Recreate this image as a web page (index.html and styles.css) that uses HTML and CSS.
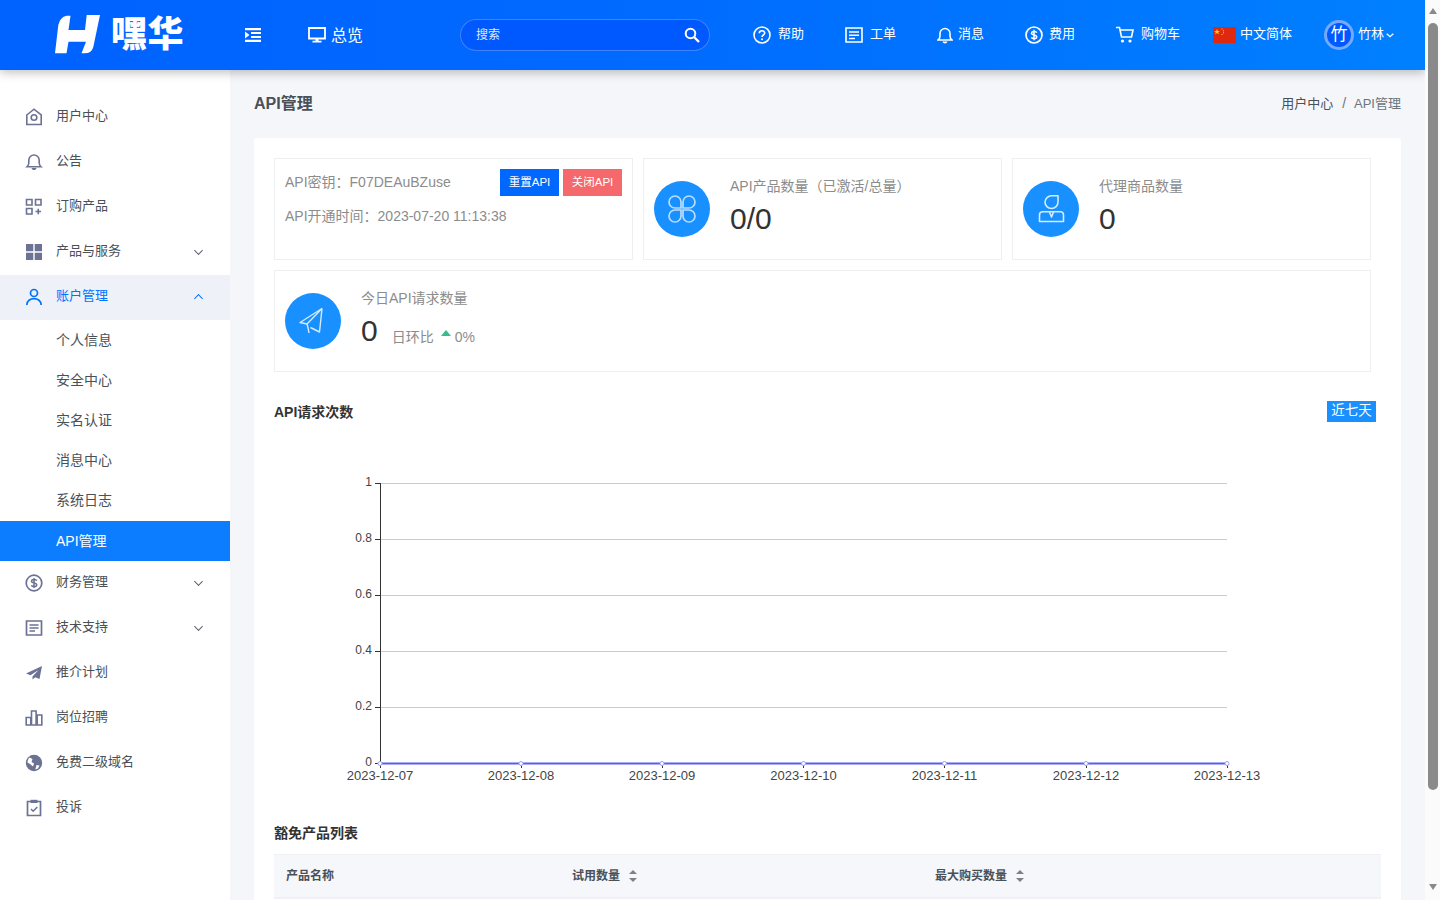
FILE: index.html
```html
<!DOCTYPE html>
<html lang="zh-CN">
<head>
<meta charset="utf-8">
<title>API管理</title>
<link rel="stylesheet" href="styles.css">
</head>
<body>
<div class="page">
  <header class="topbar">
    <div class="brand">
      <svg class="logo-h" viewBox="0 0 45 40" width="45" height="40"><path fill="#fff" d="M3.300 10Q5 2 11.700.7H15.500L13.500 15H30L31.700 0H45L38.300 32Q36.500 38.300 30 38.300H26.500L31 26.700H13.500L11.500 38.300H0Z"/></svg>
      <span class="brand-name">嘿华</span>
    </div>
    <svg class="ico menu-ico" viewBox="0 0 16 14" width="16" height="14"><path fill="#fff" d="M0 0h16v2.200H0zM6 4h10v2H6zM6 8h10v2H6zM0 11.800h16V14H0zM0 3.500 4.500 7 0 10.500z"/></svg>
    <a class="overview">
      <svg viewBox="0 0 18 16" width="18" height="16"><path fill="none" stroke="#fff" stroke-width="1.800" d="M1 1h16v10.500H1z"/><path fill="#fff" d="M7.500 11.500h3V14h-3zM4.500 13.800h9V15.500h-9z"/></svg>
      <span>总览</span>
    </a>
    <div class="search">
      <span>搜索</span>
      <svg viewBox="0 0 16 16" width="16" height="16"><circle cx="6.500" cy="6.500" r="4.800" fill="none" stroke="#fff" stroke-width="2"/><path stroke="#fff" stroke-width="2.400" d="m10 10 5 5"/></svg>
    </div>
    <nav class="topnav">
      <a class="nav-item"><svg viewBox="0 0 18 18" width="18" height="18"><circle cx="9" cy="9" r="8" fill="none" stroke="#fff" stroke-width="1.600"/><path fill="none" stroke="#fff" stroke-width="1.600" d="M6.300 7.200C6.300 4 11.700 4 11.700 7c0 2-2.700 2-2.700 4"/><circle cx="9" cy="13.300" r="1" fill="#fff"/></svg><span>帮助</span></a>
      <a class="nav-item"><svg viewBox="0 0 18 16" width="18" height="16"><path fill="none" stroke="#fff" stroke-width="1.600" d="M1 1h16v14H1z"/><path stroke="#fff" stroke-width="1.500" d="M4 5h10M4 8.200h10M4 11.400h6"/></svg><span>工单</span></a>
      <a class="nav-item item-tight"><svg viewBox="0 0 16 18" width="16" height="18"><path fill="none" stroke="#fff" stroke-width="1.600" d="M1 14c1.500-1 2-2 2-4V7.500a5 5 0 0 1 10 0V10c0 2 .5 3 2 4z"/><path fill="#fff" d="M5.500 15.500h5C10 18 6 18 5.500 15.500z"/></svg><span>消息</span></a>
      <a class="nav-item item-fee"><svg viewBox="0 0 18 18" width="18" height="18"><circle cx="9" cy="9" r="8" fill="none" stroke="#fff" stroke-width="1.700"/><path fill="none" stroke="#fff" stroke-width="1.500" d="M11.800 6.600C11 5 6.500 5 6.500 7.300c0 2.500 5.200 1 5.200 3.600 0 2.200-4.500 2-5.400.5M9 3.800v10.400"/></svg><span>费用</span></a>
      <a class="nav-item"><svg viewBox="0 0 18 18" width="18" height="18"><path fill="none" stroke="#fff" stroke-width="1.600" d="M0 1.500h3.500l2 9.500h10L17 4H4.300"/><circle cx="6.500" cy="15" r="1.600" fill="#fff"/><circle cx="14" cy="15" r="1.600" fill="#fff"/></svg><span>购物车</span></a>
      <a class="nav-item item-lang"><svg viewBox="0 0 23 16" width="23" height="16"><path fill="#de2910" d="M0 0h23v16H0z"/><path fill="#ffde00" d="m4 2 .8 2h2l-1.600 1.300.6 2L4 6l-1.800 1.300.6-2L1.200 4h2zM8.500 1.500h1v1h-1zM10 3.200h1v1h-1zM10 5.200h1v1h-1zM8.500 7h1v1h-1z"/></svg><span>中文简体</span></a>
      <a class="nav-item item-user"><span class="avatar">竹</span><span>竹林</span><svg viewBox="0 0 8 5" width="8" height="5"><path fill="none" stroke="#fff" stroke-width="1.300" d="m.7.700 3.300 3 3.300-3"/></svg></a>
    </nav>
  </header>
  <div class="body">
    <aside class="sidebar">
      <a class="side-item"><svg viewBox="0 0 18 18"><path fill="none" stroke="#6c7293" stroke-width="1.600" d="M1.800 7 9 1.200 16.200 7v9.500H1.800z"/><circle cx="9" cy="9.500" r="2.800" fill="none" stroke="#6c7293" stroke-width="1.600"/></svg><span>用户中心</span></a>
      <a class="side-item"><svg viewBox="0 0 18 18"><path fill="none" stroke="#6c7293" stroke-width="1.600" d="M2 13.800c1.200-1 1.800-2 1.800-4V7.200a5.200 5.200 0 0 1 10.400 0v2.600c0 2 .6 3 1.800 4z"/><path fill="#6c7293" d="M6.500 15h5c-.5 2.800-4.500 2.800-5 0z"/></svg><span>公告</span></a>
      <a class="side-item"><svg viewBox="0 0 18 18"><path fill="none" stroke="#6c7293" stroke-width="1.600" d="M1.500 1.500h5.500v5.500H1.500zM10.500 1.500H16v5.500h-5.500zM1.500 10.500h5.500V16H1.500z"/><path stroke="#6c7293" stroke-width="1.600" d="M10.500 13.500h5.500M13.250 10.800v5.400"/></svg><span>订购产品</span></a>
      <a class="side-item"><svg viewBox="0 0 18 18"><path fill="#6c7293" d="M1 1h7.300v7.300H1zM9.700 1H17v7.300H9.700zM1 9.700h7.300V17H1zM9.700 9.700H17V17H9.700z"/></svg><span>产品与服务</span><i class="chev"></i></a>
      <a class="side-item is-open"><svg viewBox="0 0 18 18"><circle cx="9" cy="5" r="3.500" fill="none" stroke="#0073ff" stroke-width="1.700"/><path fill="none" stroke="#0073ff" stroke-width="1.700" d="M1.800 17c0-8.500 14.400-8.500 14.400 0"/></svg><span>账户管理</span><i class="chev up"></i></a>
      <a class="sub-item">个人信息</a>
      <a class="sub-item">安全中心</a>
      <a class="sub-item">实名认证</a>
      <a class="sub-item">消息中心</a>
      <a class="sub-item">系统日志</a>
      <a class="sub-item is-active">API管理</a>
      <a class="side-item"><svg viewBox="0 0 18 18"><circle cx="9" cy="9" r="7.800" fill="none" stroke="#6c7293" stroke-width="1.700"/><path fill="none" stroke="#6c7293" stroke-width="1.500" d="M11.800 6.600C11 5 6.500 5 6.500 7.300c0 2.500 5.200 1 5.200 3.600 0 2.200-4.500 2-5.400.5M9 4v10"/></svg><span>财务管理</span><i class="chev"></i></a>
      <a class="side-item"><svg viewBox="0 0 18 18"><path fill="none" stroke="#6c7293" stroke-width="1.700" d="M1.500 2h15v14h-15z"/><path stroke="#6c7293" stroke-width="1.500" d="M4.500 6h9M4.500 9h9M4.500 12h5.500"/></svg><span>技术支持</span><i class="chev"></i></a>
      <a class="side-item"><svg viewBox="0 0 18 18"><path fill="#6c7293" d="M17 2 1 9.500l4.500 1.800L13.500 6l-6 6.500v3l2.800-2.200 4.200 1.700z"/></svg><span>推介计划</span></a>
      <a class="side-item"><svg viewBox="0 0 18 18"><path fill="none" stroke="#6c7293" stroke-width="1.600" d="M1.200 8.500h4.600V16H1.200zM6.500 2h4.600v14H6.500zM12.200 6h4.600v10h-4.600z"/></svg><span>岗位招聘</span></a>
      <a class="side-item"><svg viewBox="0 0 18 18"><circle cx="9" cy="9" r="8.200" fill="#6c7293"/><path fill="#fff" d="M4.500 3.500 7.500 5 6.500 8 9 9.500 8 12.500 5 10 2.500 8.500C2.600 6.500 3.300 4.800 4.500 3.500zM11.500 11l3 .5-1.500 3-2.700 1z"/></svg><span>免费二级域名</span></a>
      <a class="side-item"><svg viewBox="0 0 18 18"><path fill="none" stroke="#6c7293" stroke-width="1.700" d="M2.500 2.500h13v14h-13z"/><path fill="#6c7293" d="M5.500 .8h7V4h-7z"/><path fill="none" stroke="#6c7293" stroke-width="1.500" d="m6 10 2.200 2.200L12.300 8"/></svg><span>投诉</span></a>
    </aside>
    <main class="content">
      <div class="title-row">
        <h1>API管理</h1>
        <div class="crumbs"><span class="crumb-link">用户中心</span><span class="crumb-sep">/</span><span>API管理</span></div>
      </div>
      <section class="card">
        <div class="stats">
          <div class="stat stat-key">
            <div class="key-lines">
              <p>API密钥：F07DEAuBZuse</p>
              <p>API开通时间：2023-07-20 11:13:38</p>
            </div>
            <div class="key-btns"><button class="btn btn-blue">重置API</button><button class="btn btn-red">关闭API</button></div>
          </div>
          <div class="stat">
            <div class="stat-ico"><svg viewBox="0 0 28 28" width="28" height="28"><g fill="none" stroke="#b9ddff" stroke-width="1.700"><path d="M13 13V7a6 6 0 1 0-6 6zM15 13V7a6 6 0 1 1 6 6zM13 15v6a6 6 0 1 1-6-6zM15 15v6a6 6 0 1 0 6-6z"/></g></svg></div>
            <div class="stat-body"><div class="stat-label">API产品数量（已激活/总量）</div><div class="stat-num">0/0</div></div>
          </div>
          <div class="stat">
            <div class="stat-ico"><svg viewBox="0 0 28 28" width="28" height="28"><g fill="none" stroke="#d5ebff" stroke-width="1.600" stroke-linejoin="round"><path d="M8 7a6.500 6.500 0 0 1 6.500-6.200H21V7a6.500 6.500 0 0 1-13 0z"/><path d="M2.500 26.500V20q0-3.200 3.200-3.200h17.600q3.200 0 3.200 3.200v6.500z"/><path d="m12.500 17 2 5 2-5"/></g></svg></div>
            <div class="stat-body"><div class="stat-label">代理商品数量</div><div class="stat-num">0</div></div>
          </div>
          <div class="stat stat-wide">
            <div class="stat-ico"><svg viewBox="0 0 28 28" width="28" height="28"><g fill="none" stroke="#d5ebff" stroke-width="1.400" stroke-linejoin="round"><path d="M23 1.500 1 15.500l7 1.500M23 1.500 20.500 25l-9-4.500"/><path d="M23 1.500 8 17c1 3 1.500 6 2 9"/></g></svg></div>
            <div class="stat-body"><div class="stat-label">今日API请求数量</div><div class="stat-line"><span class="stat-num">0</span><span class="ratio">日环比</span><i class="tri"></i><span class="pct">0%</span></div></div>
          </div>
        </div>
        <div class="chart-head"><h2>API请求次数</h2><span class="range">近七天</span></div>
        <svg class="chart" viewBox="0 0 1107 371" width="1107" height="371">
          <g stroke="#ccc"><path d="M106 43.500h847M106 99.500h847M106 155.500h847M106 211.500h847M106 267.500h847"/></g>
          <g stroke="#333"><path d="M106.500 43v281M101 43.500h5M101 99.500h5M101 155.500h5M101 211.500h5M101 267.500h5M101 323.500h5"/><path d="M106.500 323v5M247.500 323v5M388.500 323v5M529.500 323v5M670.500 323v5M812.500 323v5M953.500 323v5"/></g>
          <g class="ylab"><text x="98" y="46">1</text><text x="98" y="102">0.8</text><text x="98" y="158">0.6</text><text x="98" y="214">0.4</text><text x="98" y="270">0.2</text><text x="98" y="326">0</text></g>
          <path d="M106 323.500h847" stroke="#5a5cf0" stroke-width="2"/>
          <g fill="#fff" stroke="#9d9ef5"><circle cx="106" cy="323.500" r="2"/><circle cx="247" cy="323.500" r="2"/><circle cx="388" cy="323.500" r="2"/><circle cx="529.500" cy="323.500" r="2"/><circle cx="670.500" cy="323.500" r="2"/><circle cx="812" cy="323.500" r="2"/><circle cx="953" cy="323.500" r="2"/></g>
          <g class="xlab"><text x="106" y="340">2023-12-07</text><text x="247" y="340">2023-12-08</text><text x="388" y="340">2023-12-09</text><text x="529.500" y="340">2023-12-10</text><text x="670.500" y="340">2023-12-11</text><text x="812" y="340">2023-12-12</text><text x="953" y="340">2023-12-13</text></g>
        </svg>
        <h2 class="list-title">豁免产品列表</h2>
        <div class="thead">
          <div class="th th-name">产品名称</div>
          <div class="th th-trial">试用数量<i class="sort"></i></div>
          <div class="th">最大购买数量<i class="sort"></i></div>
        </div>
      </section>
    </main>
  </div>
</div>
<div class="scrollbar">
  <i class="sb-up"></i>
  <i class="sb-thumb"></i>
  <i class="sb-down"></i>
</div>
</body>
</html>
```
FILE: styles.css
```css
* { box-sizing: border-box; }
html, body { margin: 0; height: 900px; overflow: hidden; }
body {
  display: flex;
  font-family: "Liberation Sans", "Noto Sans CJK SC", sans-serif;
  font-size: 13px;
  color: #495057;
  background: #f5f6fa;
}
.page { width: 1425px; height: 900px; overflow: hidden; display: flex; flex-direction: column; }
.scrollbar { width: 15px; height: 900px; background: #fbfbfb; display: flex; flex-direction: column; align-items: center; }
.sb-up { width: 0; height: 0; margin-top: 8px; border: 4.500px solid transparent; border-top: 0; border-bottom: 6px solid #8a8a8a; }
.sb-thumb { width: 10px; height: 767px; margin-top: 9px; border-radius: 5px; background: #8a8a8a; }
.sb-down { width: 0; height: 0; margin-top: 94px; border: 4.500px solid transparent; border-bottom: 0; border-top: 6px solid #8a8a8a; }

.topbar {
  height: 70px;
  flex: none;
  display: flex;
  align-items: center;
  background: linear-gradient(90deg, #0062ff 0%, #0069ff 40%, #0080ff 100%);
  box-shadow: 0 2px 10px rgba(0, 0, 0, .28);
  color: #fff;
  position: relative;
  z-index: 2;
}
.brand { width: 245px; flex: none; padding-left: 55px; display: flex; align-items: center; }
.logo-h { display: block; }
.brand-name { margin-left: 11px; font-size: 36px; line-height: 40px; font-weight: 900; letter-spacing: .5px; }
.menu-ico { flex: none; }
.overview { display: flex; align-items: center; margin-left: 47px; font-size: 16px; }
.overview span { margin: -3px 0 0 5px; }
.search {
  width: 250px; height: 32px; margin-left: 97px; padding: 0 9px 0 15px;
  display: flex; align-items: center; justify-content: space-between;
  background: #0059ff; border: 1px solid rgba(255, 255, 255, .25); border-radius: 16px;
  font-size: 12px; color: #dfe9ff;
}
.search span { margin-top: -3px; }
.topnav { display: flex; align-items: center; margin-left: 43px; gap: 41px; }
.nav-item { display: flex; align-items: center; gap: 7px; font-size: 13px; color: #fff; }
.nav-item span { line-height: 18px; margin-top: -2px; }
.item-tight { gap: 5px; }
.item-fee { gap: 6px; }
.item-lang { margin-left: -8px; gap: 4px; }
.item-user { margin-left: -9px; gap: 4px; }
.item-user .avatar {
  width: 30px; height: 30px; margin-top: 0; border-radius: 50%;
  background: #0059ff; border: 3px solid #73a9ff;
  font-size: 17px; line-height: 24px; display: flex; align-items: center; justify-content: center;
}
.item-user svg { margin-left: -2px; }

.body { flex: 1; display: flex; min-height: 0; }
.sidebar { width: 230px; flex: none; padding-top: 25px; background: #fff; }
.side-item { height: 45px; padding: 0 28px 2px 25px; display: flex; align-items: center; color: #495057; }
.side-item svg { width: 18px; height: 18px; flex: none; margin-right: 13px; }
.side-item span { flex: 1; margin-top: -4px; }
.chev { width: 7px; height: 7px; border-right: 1.500px solid #555c66; border-bottom: 1.500px solid #555c66; transform: rotate(45deg) scale(.9); margin-top: -3px; }
.chev.up { transform: rotate(225deg) scale(.9); margin-top: 3px; border-color: #0073ff; }
.is-open { background: #eef1f7; color: #0073ff; }
.sub-item { height: 40px; padding: 0 0 3px 56px; display: flex; align-items: center; font-size: 14px; color: #495057; }
.sub-item.is-active { margin-top: 1px; background: #0d7dff; color: #fff; }

.content { flex: 1; min-width: 0; padding: 0 24px; }
.title-row { height: 68px; padding-bottom: 4px; display: flex; align-items: center; justify-content: space-between; }
h1 { margin: 0; font-size: 16px; font-weight: 700; color: #495057; }
.crumbs { display: flex; align-items: baseline; font-size: 13px; color: #6c757d; }
.crumb-link { color: #495057; }
.crumb-sep { margin: 0 8px 0 9px; font-size: 14px; }
.card { height: 800px; padding: 20px; background: #fff; border-radius: 3px; }
.stats { width: 1097px; display: grid; grid-template-columns: repeat(3, 359px); grid-auto-rows: 102px; gap: 10px; }
.stat { border: 1px solid #eeeff1; padding: 0 10px; display: flex; align-items: center; }
.stat-wide { grid-column: 1 / span 3; }
.stat-key { align-items: flex-start; justify-content: space-between; }
.key-lines { width: 200px; font-size: 14px; color: #8c8c8c; padding-top: 15px; white-space: nowrap; }
.key-lines p { margin: 0 0 17px; line-height: 17px; }
.key-btns { display: flex; gap: 4px; padding-top: 10px; }
.btn { width: 59px; height: 27px; padding: 0 0 3px; border: 0; color: #fff; font: inherit; font-size: 11.500px; }
.btn-blue { background: #0068ff; }
.btn-red { background: #f5686b; }
.stat-ico { width: 56px; height: 56px; flex: none; border-radius: 50%; background: #1890ff; display: flex; align-items: center; justify-content: center; }
.stat-body { margin: -4px 0 0 20px; }
.stat-label { font-size: 14px; line-height: 18px; color: #8c8c8c; }
.stat-num { display: block; margin-top: 6px; font-size: 30px; line-height: 36px; color: #333; }
.stat-line { display: flex; align-items: center; }
.stat-line .stat-num { margin-top: 6px; }
.ratio { margin: 16px 0 0 14px; font-size: 14px; color: #8c8c8c; }
.tri { width: 0; height: 0; margin: 9px 4px 0 7px; border: 5.500px solid transparent; border-top: 0; border-bottom: 6px solid #35bd8e; }
.pct { margin-top: 18px; font-size: 14px; color: #8c8c8c; }
.chart-head { width: 1102px; height: 21px; margin-top: 29px; display: flex; align-items: center; justify-content: space-between; }
h2 { margin: 0; font-size: 14px; line-height: 18px; font-weight: 700; color: #333; }
.range { width: 49px; height: 21px; background: #1890ff; color: #fff; font-size: 13.500px; line-height: 19px; text-align: center; }
.chart { display: block; margin-top: 18px; font-size: 12px; }
.chart text { fill: #444; font-family: "Liberation Sans", sans-serif; }
.ylab { text-anchor: end; }
.xlab { text-anchor: middle; font-size: 13px; }
.list-title { margin-top: 13px; }
.thead { width: 1107px; height: 45px; margin-top: 12px; display: flex; align-items: center; padding-left: 12px; background: #f6f7fb; border-top: 1px solid #eff1f6; border-bottom: 2px solid #eff1f6; }
.th { font-size: 12px; font-weight: 700; color: #495057; display: flex; align-items: center; line-height: 16px; }
.th-name { width: 286px; }
.th-trial { width: 363px; }
.sort { display: block; width: 8px; height: 12px; margin-left: 9px; position: relative; }
.sort::before, .sort::after { content: ""; position: absolute; left: 0; width: 0; height: 0; border: 4px solid transparent; }
.sort::before { top: 0; border-top: 0; border-bottom: 4px solid #7c8088; }
.sort::after { bottom: 0; border-bottom: 0; border-top: 4px solid #7c8088; }
```
